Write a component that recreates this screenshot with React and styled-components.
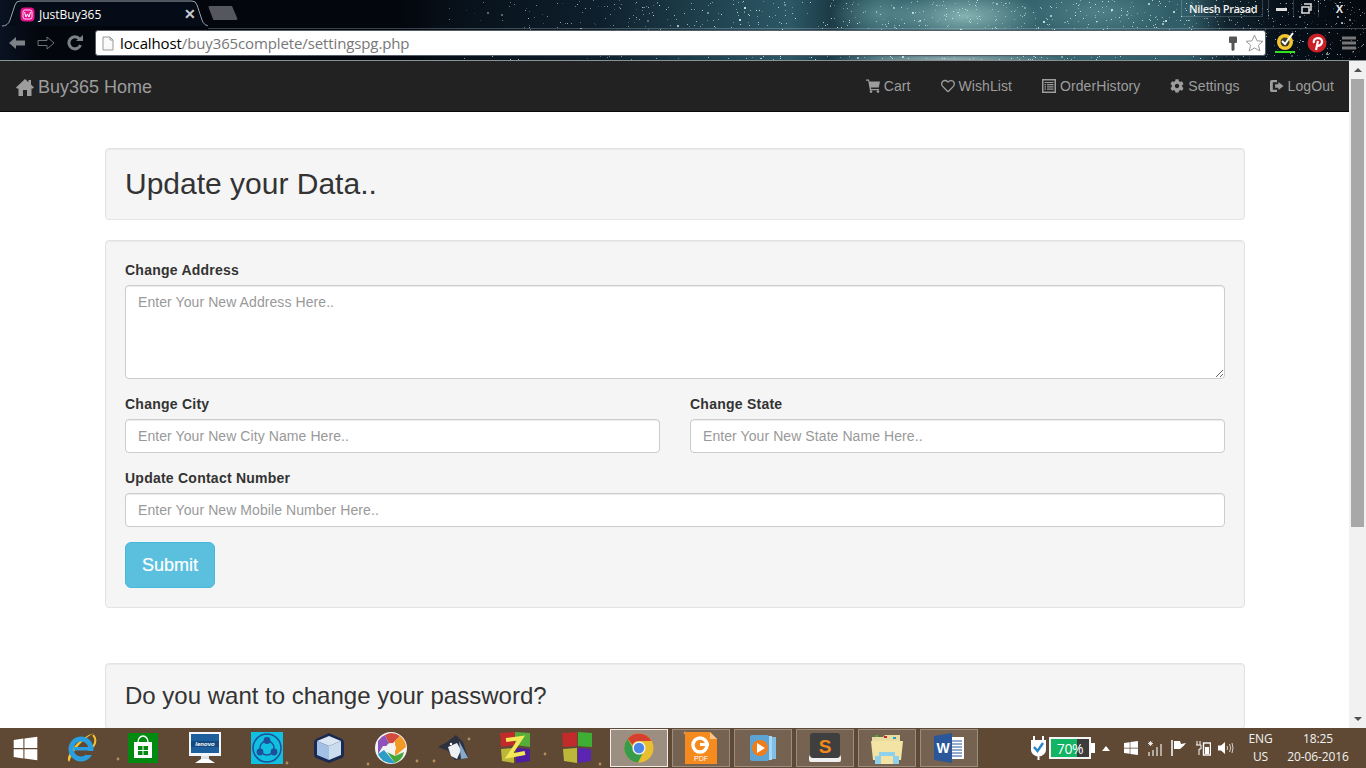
import React from 'react';
import styled, { createGlobalStyle } from 'styled-components';
import { FaRegHeart, FaCog, FaWindows } from 'react-icons/fa';

const GlobalStyle = createGlobalStyle`
  * { box-sizing: border-box; }
  html, body { margin: 0; height: 100%; overflow: hidden; }
  body { font-family: "Liberation Sans", Arial, sans-serif; font-size: 14px; color: #333; background: #fff; }
`;

const Page = styled.div`
  height: 768px;
  display: flex;
  flex-direction: column;
  overflow: hidden;
`;

/* ---------- browser frame ---------- */
const Frame = styled.div`
  position: relative;
  height: 61px;
  flex: none;
  overflow: hidden;
  border-bottom: 1px solid #8b9296;
  background:
    radial-gradient(ellipse 75px 26px at 965px 16px, rgba(160,205,200,.75), transparent),
    radial-gradient(ellipse 50px 24px at 880px 14px, rgba(120,170,170,.5), transparent),
    radial-gradient(ellipse 70px 24px at 1100px 12px, rgba(110,160,165,.45), transparent),
    radial-gradient(ellipse 120px 6px at 950px 59px, rgba(190,205,205,.7), transparent),
    linear-gradient(90deg, #0a1322 0, #03060d 40px, #03060d 400px, #071019 450px, #0e1f2c 600px, #1e3f4c 700px, #2d5866 790px, #1c3b47 830px, #33616c 880px, #36656f 1090px, #305c67 1190px, #12252f 1225px, #06101a 1280px, #05090f 1366px);
`;

const Stars = styled.svg`
  position: absolute;
  inset: 0;
`;

const TabRow = styled.div`
  position: relative;
  height: 29px;
  display: flex;
  align-items: flex-start;
  padding-left: 2px;
  &::after {
    content: "";
    position: absolute;
    left: 208px;
    right: 0;
    bottom: 0;
    height: 1px;
    background: rgba(190,200,205,.3);
  }
`;

const Tab = styled.div`
  position: relative;
  width: 206px;
  height: 27px;
  display: flex;
  align-items: center;
  padding: 1px 12px 0 18px;
  gap: 4px;
  color: #fff;
  font: 12px "Open Sans", sans-serif;
`;

const TabShape = styled.svg`
  position: absolute;
  left: 0;
  top: 0;
`;

const TabTitle = styled.span`
  position: relative;
  flex: 1;
`;

const TabClose = styled.span`
  position: relative;
  color: #c9ccd0;
  font: bold 14px "Liberation Sans", sans-serif;
`;

const NewTab = styled.div`
  width: 30px;
  height: 14px;
  margin: 6px 0 0 0;
  background: #55575c;
  clip-path: polygon(0 0, 80% 0, 100% 100%, 18% 100%);
  border-radius: 2px;
`;

const WindowControls = styled.div`
  position: absolute;
  top: 0;
  right: 6px;
  display: flex;
  align-items: center;
  height: 17px;
  color: #e8e8e8;
`;

const UserName = styled.span`
  font: 600 11px "Open Sans", sans-serif;
  letter-spacing: -0.35px;
  color: #f0f0f0;
  width: 82px;
  height: 17px;
  line-height: 17px;
  padding-left: 7px;
  border: 1px solid rgba(255,255,255,.18);
  border-top: 0;
  margin-right: 5px;
`;

const WinButton = styled.span`
  display: flex;
  align-items: center;
  justify-content: center;
  width: ${p => p.$w}px;
  height: 17px;
  border-left: 1px solid rgba(255,255,255,.18);
  font: bold 11px "Liberation Sans", sans-serif;
`;

const ToolRow = styled.div`
  position: relative;
  display: flex;
  align-items: center;
  height: 26px;
  margin-top: 1px;
  padding-left: 2px;
`;

const NavIcon = styled.span`
  display: flex;
  justify-content: center;
  width: 29px;
`;

const Omnibox = styled.div`
  width: 1171px;
  height: 26px;
  margin-left: 6px;
  background: #fff;
  border: 1px solid #555e66;
  border-radius: 3px;
  display: flex;
  align-items: center;
  padding: 0 1px 0 6px;
`;

const Url = styled.div`
  flex: 1;
  margin-left: 6px;
  font: 15px "Open Sans", sans-serif;
  letter-spacing: -0.12px;
  color: #777;
  span { color: #000; }
`;

const Extensions = styled.div`
  display: flex;
  align-items: center;
  margin-left: 9px;
  gap: 12px;
`;

/* ---------- navbar ---------- */
const Main = styled.div`
  flex: 1;
  display: flex;
  min-height: 0;
`;

const Viewport = styled.div`
  flex: 1;
  min-width: 0;
  overflow: hidden;
`;

const Navbar = styled.nav`
  height: 51px;
  background: #222;
  border-bottom: 1px solid #080808;
  display: flex;
  align-items: center;
  justify-content: space-between;
  color: #9d9d9d;
`;

const Brand = styled.a`
  display: flex;
  align-items: center;
  gap: 4px;
  padding: 2px 15px 0 16px;
  font-size: 18px;
  line-height: 20px;
`;

const NavLinks = styled.ul`
  display: flex;
  list-style: none;
  margin: 0;
  padding: 0 15px 0 0;
`;

const NavLink = styled.li`
  display: flex;
  align-items: center;
  gap: 4px;
  padding: 0 15px;
  line-height: 20px;
  letter-spacing: 0.08px;
  margin-top: -1px;
  &:last-child { padding-right: 0; }
`;

/* ---------- page body ---------- */
const Container = styled.div`
  padding: 36px 104px 0 105px;
`;

const Well = styled.section`
  background: #f5f5f5;
  border: 1px solid #e3e3e3;
  border-radius: 4px;
  padding: 19px;
  margin-bottom: ${p => p.$mb || 20}px;
  box-shadow: inset 0 1px 1px rgba(0,0,0,.05);
`;

const Title = styled.h3`
  margin: 0;
  font-size: 30px;
  font-weight: 500;
  line-height: 32px;
`;

const SubTitle = styled.h3`
  margin: 0;
  font-size: 24px;
  font-weight: 500;
  line-height: 26px;
`;

const Field = styled.div`
  margin-bottom: 15px;
`;

const FieldRow = styled.div`
  display: grid;
  grid-template-columns: 1fr 1fr;
  gap: 30px;
`;

const Label = styled.label`
  display: block;
  font-weight: 700;
  letter-spacing: 0.24px;
  line-height: 20px;
  margin-bottom: 5px;
`;

const controlCss = `
  display: block;
  width: 100%;
  padding: 6px 12px;
  font: 14px/20px "Liberation Sans", sans-serif;
  letter-spacing: 0.08px;
  color: #555;
  background: #fff;
  border: 1px solid #ccc;
  border-radius: 4px;
  box-shadow: inset 0 1px 1px rgba(0,0,0,.075);
  &::placeholder { color: #999; opacity: 1; }
`;

const Input = styled.input`
  ${controlCss}
  height: 34px;
`;

const TextArea = styled.textarea`
  ${controlCss}
  height: 94px;
  margin-bottom: 0;
`;

const SubmitButton = styled.button`
  display: block;
  width: 90px;
  height: 46px;
  padding: 10px 16px;
  font: 18px/24px "Liberation Sans", sans-serif;
  -webkit-text-stroke: 0.2px #fff;
  color: #fff;
  background: #5bc0de;
  border: 1px solid #46b8da;
  border-radius: 6px;
`;

/* ---------- scrollbar ---------- */
const Scrollbar = styled.div`
  width: 17px;
  flex: none;
  background: #f1f1f1;
  display: flex;
  flex-direction: column;
  align-items: center;
`;

const Arrow = styled.div`
  height: 18px;
  flex: none;
  display: flex;
  align-items: center;
  &::before {
    content: "";
    border-left: 4px solid transparent;
    border-right: 4px solid transparent;
    ${p => p.$down ? 'border-top: 4px solid #505050;' : 'border-bottom: 4px solid #505050;'}
  }
`;

const Thumb = styled.div`
  width: 13px;
  height: 448px;
  background: #a8a8a8;
`;

const Track = styled.div`
  flex: 1;
`;

/* ---------- taskbar ---------- */
const Taskbar = styled.footer`
  position: relative;
  height: 40px;
  flex: none;
  display: flex;
  align-items: center;
  background: #5f4934;
  color: #f2f2f2;
  overflow: hidden;
`;

const StartButton = styled.div`
  width: 50px;
  display: flex;
  justify-content: center;
  color: #fff;
`;

const TaskItem = styled.div`
  position: relative;
  width: 58px;
  height: 38px;
  margin: 0 2px;
  display: flex;
  align-items: center;
  justify-content: center;
  ${p => p.$open && `
    background: rgba(255,255,255,.14);
    border: 1px solid rgba(255,255,255,.28);
  `}
  ${p => p.$active && `
    background: rgba(255,255,255,.38);
    border: 1px solid rgba(255,255,255,.85);
  `}
`;

const Tray = styled.div`
  position: relative;
  margin-left: auto;
  display: flex;
  align-items: center;
  height: 40px;
`;

const TrayIcon = styled.span`
  display: flex;
  justify-content: center;
  width: ${p => p.$w || 24}px;
  color: #fff;
`;

const Battery = styled.div`
  position: relative;
  width: 42px;
  height: 22px;
  border: 2px solid #f4f4f4;
  background: linear-gradient(90deg, #12b564 0 68%, #3c3c3c 68%);
  display: flex;
  align-items: center;
  justify-content: center;
  color: #fff;
  font: 14px "Open Sans", sans-serif;
  letter-spacing: -0.4px;
  margin-right: 3px;
  &::after {
    content: "";
    position: absolute;
    right: -6px;
    top: 4px;
    width: 4px;
    height: 10px;
    background: #fff;
  }
`;

const TrayText = styled.div`
  width: ${p => p.$w}px;
  text-align: center;
  font: 12px/18px "Open Sans", sans-serif;
  color: #f2f2f2;
  letter-spacing: -0.1px;
`;

// stars only start about a third of the way across the wallpaper
const starData = (() => {
  let s = 7;
  const r = () => (s = (s * 16807) % 2147483647) / 2147483647;
  return Array.from({ length: 1300 }, () => {
    const x = 440 + Math.pow(r(), 0.7) * 926;
    return {
      x: Math.round(x),
      y: Math.round(r() * 60),
      o: (x > 640 && x < 1200 ? 0.3 : 0.12) + r() * 0.6,
      s: r() > 0.96 ? 2 : 1,
    };
  });
})();

const sparkData = [[118, 31], [287, 35], [368, 36], [417, 33], [434, 33], [469, 11], [545, 26], [600, 36], [685, 5]];

const Arrowhead = ({ flip, color, hollow }) => (
  <svg width="18" height="14" viewBox="0 0 18 14" style={{ transform: flip ? 'scaleX(-1)' : 'none' }}>
    <path d="M1 7 L8 1 V4.5 H17 V9.5 H8 V13 Z" fill={hollow ? 'none' : color} stroke={hollow ? color : 'none'} />
  </svg>
);

const Favicon = () => (
  <svg width="15" height="15" viewBox="0 0 15 15" style={{ position: 'relative' }}>
    <rect x="0.5" y="0.5" width="14" height="14" rx="4" fill="#e5128c" />
    <rect x="3" y="3" width="9" height="9" rx="2" fill="none" stroke="#ffd8ee" strokeWidth="1" />
    <path d="M4.5 5 L6 10 L7.5 7 L9 10 L10.5 5" fill="none" stroke="#fff" strokeWidth="1" />
  </svg>
);

const HomeGlyph = () => (
  <svg width="18" height="17" viewBox="0 0 18 17">
    <path d="M9 0 L12.5 3.2 V1 H15 V5.5 L18 8.5 L17 9.5 H15.5 V17 H11 V11 H7 V17 H2.5 V9.5 H1 L0 8.5 Z" fill="currentColor" />
  </svg>
);

const CartGlyph = () => (
  <svg width="14" height="14" viewBox="0 0 14 14">
    <path d="M0 0.5 H3 L3.6 2.5 H14 L12.8 8.5 H5 L5.2 10 H13 V11.2 H3.9 L2.2 1.8 H0 Z" fill="currentColor" />
    <circle cx="5" cy="12.6" r="1.3" fill="currentColor" />
    <circle cx="12" cy="12.6" r="1.3" fill="currentColor" />
  </svg>
);

const ListGlyph = () => (
  <svg width="14" height="14" viewBox="0 0 14 14">
    <rect x="0.75" y="0.75" width="12.5" height="12.5" fill="none" stroke="currentColor" strokeWidth="1.5" />
    <path d="M2.5 3.5 H11.5 M2.5 5.7 H4 M5 5.7 H11.5 M2.5 7.9 H4 M5 7.9 H11.5 M2.5 10.1 H4 M5 10.1 H11.5" stroke="currentColor" strokeWidth="1.2" />
  </svg>
);

const LogoutGlyph = () => (
  <svg width="14" height="14" viewBox="0 0 15 14">
    <path d="M0 2.5 Q0 .5 2 .5 H7.5 V3 H3 V11 H7.5 V13.5 H2 Q0 13.5 0 11.5 Z" fill="currentColor" />
    <path d="M5.5 5.2 H9 V2.8 L14.5 7 L9 11.2 V8.8 H5.5 Z" fill="currentColor" />
  </svg>
);

const ShellIcons = {
  ie: (
    <svg width="32" height="32" viewBox="0 0 32 32">
      <path d="M4 30 C-1 26 12 6 29 1 C20 5 8 18 5 28" fill="#f2c230" />
      <path d="M28 3 C32 7 30 12 28 15" fill="none" stroke="#f2c230" strokeWidth="2" />
      <circle cx="16" cy="17" r="10" fill="none" stroke="#2a9fe0" strokeWidth="5" />
      <rect x="9" y="15" width="16" height="3.5" fill="#2a9fe0" />
      <rect x="21" y="19" width="8" height="4" fill="#5f4934" />
    </svg>
  ),
  store: (
    <svg width="30" height="30" viewBox="0 0 30 30">
      <rect width="30" height="30" fill="#018a10" />
      <path d="M10 9 A5 6 0 0 1 20 9" fill="none" stroke="#fff" strokeWidth="1.3" />
      <rect x="6" y="9" width="18" height="16" fill="#fff" />
      <path d="M10 13 h4.5 v4 h-4.5 z M15.5 13 h4.5 v4 h-4.5 z M10 18 h4.5 v4 h-4.5 z M15.5 18 h4.5 v4 h-4.5 z" fill="#018a10" />
    </svg>
  ),
  lenovo: (
    <svg width="32" height="32" viewBox="0 0 32 32">
      <rect x="0" y="0" width="32" height="24" fill="#f2f5fa" />
      <rect x="2" y="2" width="28" height="19" fill="#1d5f9c" />
      <rect x="2" y="9" width="28" height="6" fill="#134a80" />
      <rect x="12" y="24" width="8" height="4" fill="#dfe3e8" />
      <path d="M6 31 L12 27 H20 L26 31 Z" fill="#fff" />
      <text x="16" y="14" fontSize="6" fontStyle="italic" fontWeight="700" textAnchor="middle" fill="#fff" fontFamily="Liberation Sans">lenovo</text>
    </svg>
  ),
  share: (
    <svg width="32" height="32" viewBox="0 0 32 32">
      <rect width="32" height="32" fill="#11bfe0" />
      <circle cx="16" cy="16" r="14" fill="none" stroke="#1d4f9c" strokeWidth="1.5" />
      <circle cx="16" cy="16" r="7" fill="none" stroke="#1d4f9c" strokeWidth="1.5" />
      <circle cx="16" cy="8.5" r="3.4" fill="#1d4f9c" />
      <circle cx="9" cy="20" r="3.4" fill="#1d4f9c" />
      <circle cx="23" cy="20" r="3.4" fill="#1d4f9c" />
    </svg>
  ),
  cube: (
    <svg width="32" height="32" viewBox="0 0 32 32">
      <path d="M16 1 L29 7 Q31 8 31 11 V22 Q31 25 29 26 L16 31 L3 26 Q1 25 1 22 V11 Q1 8 3 7 Z" fill="#1a2a52" />
      <path d="M16 4 L28 9 L16 14 L4 9 Z" fill="#dbe6f3" />
      <path d="M4 9 L16 14 V28 L4 23 Z" fill="#a3c1e4" />
      <path d="M28 9 L16 14 V28 L28 23 Z" fill="#cbdcef" />
    </svg>
  ),
  picasa: (
    <svg width="32" height="32" viewBox="0 0 32 32">
      <circle cx="16" cy="16" r="16" fill="#f3f3f3" />
      <path d="M16 1 A15 15 0 0 1 25 4 L15 14 L10 3 A15 15 0 0 1 16 1 Z" fill="#d24b3e" />
      <path d="M25 4 A15 15 0 0 1 31 15 L20 24 L20 9 Z" fill="#f29b24" />
      <path d="M3 9 A15 15 0 0 1 10 3 L15 14 L8 14 L3 22 Z" fill="#8d53bb" />
      <path d="M3 22 L9 18 L20 31 A15 15 0 0 1 3 22 Z" fill="#2e9cc9" />
      <path d="M12 20 L20 24 L29 20 A15 15 0 0 1 20 31 Z" fill="#46a83c" />
      <circle cx="16" cy="16" r="5" fill="#f3f3f3" />
    </svg>
  ),
  bird: (
    <svg width="32" height="28" viewBox="0 0 32 28">
      <path d="M1 13 L10 8 L19 1 L23 5 L26 8 L31 24 L18 26 L11 17 Z" fill="#2c3240" />
      <path d="M11 13 L20 9 L24 16 L20 25 L14 22 Z" fill="#eef1f4" />
      <path d="M22 7 L31 24 L24 25 Z" fill="#87a9c9" />
      <circle cx="14" cy="10" r="1.2" fill="#fff" />
    </svg>
  ),
  ztile: (
    <svg width="30" height="32" viewBox="0 0 30 32">
      <path d="M0 1 L15 0 V13 L1 15 Z" fill="#c22b2b" />
      <path d="M15 0 L30 1 V15 L15 13 Z" fill="#56ae3a" />
      <path d="M1 17 L14 16 V31 L2 29 Z" fill="#bcb93a" />
      <path d="M16 16 L30 17 V29 L16 31 Z" fill="#4f1ea0" />
      <path d="M6 8 L21 6 L9 24 L25 21" fill="none" stroke="#f4e857" strokeWidth="4" />
    </svg>
  ),
  tiles: (
    <svg width="30" height="32" viewBox="0 0 30 32">
      <path d="M0 1 L15 0 V14 L1 15 Z" fill="#c22b2b" />
      <path d="M16 0 L30 1 V15 L16 14 Z" fill="#3fae35" />
      <path d="M1 17 L15 16 V31 L2 29 Z" fill="#bcb93a" />
      <path d="M16 16 L29 17 V29 L16 31 Z" fill="#5a25b3" />
    </svg>
  ),
  chrome: (
    <svg width="30" height="30" viewBox="0 0 30 30">
      <circle cx="15" cy="15" r="14.5" fill="#e9bf2f" />
      <path d="M15 .5 A14.5 14.5 0 0 1 27.5 8 H15 A7 7 0 0 0 8.5 12 L3.7 5.8 A14.5 14.5 0 0 1 15 .5 Z" fill="#d6412f" />
      <path d="M3.7 5.8 L9 15 A6 6 0 0 0 19 19.7 L14 29.5 A14.5 14.5 0 0 1 3.7 5.8 Z" fill="#379b4a" />
      <circle cx="15" cy="15" r="6.6" fill="#f1f1f1" />
      <circle cx="15" cy="15" r="5.2" fill="#4a85e8" />
    </svg>
  ),
  foxit: (
    <svg width="32" height="32" viewBox="0 0 32 32">
      <path d="M0 0 H25 L32 7 V32 H0 Z" fill="#f58a1f" />
      <path d="M25 0 L32 7 H25 Z" fill="#fbc48a" />
      <circle cx="15" cy="13" r="7" fill="none" stroke="#fff" strokeWidth="3.5" />
      <rect x="15" y="11" width="9" height="3" fill="#fff" />
      <text x="16" y="29" fontSize="7" textAnchor="middle" fill="#fff" fontFamily="Liberation Sans">PDF</text>
    </svg>
  ),
  player: (
    <svg width="28" height="28" viewBox="0 0 28 28">
      <rect x="10" y="3" width="17" height="22" fill="#7fc0e8" />
      <rect x="6" y="2" width="17" height="24" fill="#a9d5f0" />
      <rect x="1" y="1" width="19" height="26" rx="2" fill="#5da3d4" />
      <circle cx="11" cy="14" r="8" fill="#ef7d1a" />
      <path d="M8 9 L16 14 L8 19 Z" fill="#fff" />
    </svg>
  ),
  sublime: (
    <svg width="32" height="30" viewBox="0 0 32 30">
      <rect x="0" y="22" width="32" height="7" rx="2" fill="#f0f0f0" />
      <rect x="1" y="0" width="30" height="25" rx="3" fill="#3f3f3f" />
      <text x="16" y="20" fontSize="19" fontWeight="700" textAnchor="middle" fill="#f08a1d" fontFamily="Liberation Sans">S</text>
    </svg>
  ),
  folder: (
    <svg width="32" height="32" viewBox="0 0 32 32">
      <path d="M1 5 H12 L14 3 H29 V10 H1 Z" fill="#e9dca0" />
      <rect x="4" y="3" width="3" height="2" fill="#3fae35" />
      <rect x="13" y="4" width="3" height="2" fill="#c22b2b" />
      <rect x="22" y="5" width="3" height="2" fill="#2e9cc9" />
      <path d="M0 9 H32 L30 28 H2 Z" fill="#f3e4a6" />
      <path d="M4 24 H8 V20 H24 V24 H28 V32 H4 Z" fill="#8fd0ea" />
      <rect x="10" y="24" width="12" height="8" fill="#f3e4a6" />
    </svg>
  ),
  word: (
    <svg width="30" height="30" viewBox="0 0 30 30">
      <rect x="14" y="4" width="16" height="22" fill="#fff" />
      <path d="M17 8 H28 M17 11 H28 M17 14 H28 M17 17 H28 M17 20 H28 M17 23 H28" stroke="#2b579a" strokeWidth="1" />
      <path d="M0 3 L18 0 V30 L0 27 Z" fill="#2b579a" />
      <text x="9" y="20" fontSize="14" fontWeight="700" textAnchor="middle" fill="#fff" fontFamily="Liberation Sans">W</text>
    </svg>
  ),
};

const pinned = ['ie', 'store', 'lenovo', 'share', 'cube', 'picasa', 'bird', 'ztile', 'tiles'];
const running = ['chrome', 'foxit', 'player', 'sublime', 'folder', 'word'];

const links = [
  { label: 'Cart', icon: <CartGlyph /> },
  { label: 'WishList', icon: <FaRegHeart size={14} /> },
  { label: 'OrderHistory', icon: <ListGlyph /> },
  { label: 'Settings', icon: <FaCog size={14} /> },
  { label: 'LogOut', icon: <LogoutGlyph /> },
];

export default function App() {
  return (
    <Page>
      <GlobalStyle />
      <Frame>
        <Stars width="1366" height="61">
          {starData.map((d, i) => (
            <rect key={i} x={d.x} y={d.y} width={d.s} height={d.s} fill="#d6ecec" opacity={d.o} />
          ))}
        </Stars>
        <TabRow>
          <Tab>
            <TabShape width="206" height="28" viewBox="0 0 206 28">
              <path d="M0 26 Q6 26 8 20 L13 5 Q14 1 18 1 L190 1 Q194 1 195 5 L200 20 Q202 26 208 26" fill="#060c17" stroke="#9aa3ab" strokeWidth="1" />
            </TabShape>
            <Favicon />
            <TabTitle>JustBuy365</TabTitle>
            <TabClose>✕</TabClose>
          </Tab>
          <NewTab />
        </TabRow>
        <WindowControls>
          <UserName>Nilesh Prasad</UserName>
          <WinButton $w={25}>
            <svg width="11" height="4"><rect width="11" height="3" y="1" fill="#ddd" /></svg>
          </WinButton>
          <WinButton $w={25}>
            <svg width="11" height="11" viewBox="0 0 11 11"><path d="M3 1 H10 V7 H8 M1 4 H8 V10 H1 Z" fill="none" stroke="#ddd" strokeWidth="1.5" /></svg>
          </WinButton>
          <WinButton $w={42}>X</WinButton>
        </WindowControls>
        <ToolRow>
          <NavIcon><Arrowhead color="#7d8286" /></NavIcon>
          <NavIcon><Arrowhead flip hollow color="#6d7276" /></NavIcon>
          <NavIcon>
            <svg width="18" height="18" viewBox="0 0 18 18">
              <path d="M14.5 11 A6 6 0 1 1 13.5 5" fill="none" stroke="#7d8286" strokeWidth="3" />
              <path d="M10 7 H17 V1 Z" fill="#7d8286" />
            </svg>
          </NavIcon>
          <Omnibox>
            <svg width="12" height="15" viewBox="0 0 12 15">
              <path d="M1 1 H8 L11 4 V14 H1 Z M8 1 V4 H11" fill="#fafafa" stroke="#9a9a9a" />
            </svg>
            <Url><span>localhost</span>/buy365complete/settingspg.php</Url>
            <svg width="10" height="15" viewBox="0 0 10 15" style={{ marginRight: 7 }}>
              <path d="M1 1.5 Q1 .5 2 .5 H8 Q9 .5 9 1.5 V6 Q9 7 8 7 H6.5 V14 L4.5 15 L3.5 14 V7 H2 Q1 7 1 6 Z" fill="#555" />
            </svg>
            <svg width="19" height="18" viewBox="0 0 19 18">
              <path d="M9.5 1 L12 6.8 L18 7.3 L13.4 11.2 L14.9 17 L9.5 13.9 L4.1 17 L5.6 11.2 L1 7.3 L7 6.8 Z" fill="#fff" stroke="#999" />
            </svg>
          </Omnibox>
          <Extensions>
            <svg width="20" height="22" viewBox="0 0 20 22">
              <circle cx="10" cy="10" r="8" fill="#f3c62e" />
              <circle cx="10" cy="10" r="4.5" fill="#3a3a2a" />
              <path d="M7 9 L10 12 L18 1" fill="none" stroke="#fff" strokeWidth="2" />
              <rect y="19" width="20" height="2" fill="#32e020" />
            </svg>
            <svg width="20" height="20" viewBox="0 0 20 20">
              <circle cx="10" cy="10" r="9.5" fill="#cb2027" />
              <path d="M9 17 L11 8 M7 10 C5 5 14 3 15 8 C15.5 12 11 14 9.5 12" fill="none" stroke="#fff" strokeWidth="2.2" />
            </svg>
            <svg width="14" height="14" viewBox="0 0 14 14" style={{ marginLeft: 3 }}>
              <path d="M0 2 H14 M0 7 H14 M0 12 H14" stroke="#777" strokeWidth="3" />
            </svg>
          </Extensions>
        </ToolRow>
      </Frame>

      <Main>
        <Viewport>
          <Navbar>
            <Brand><HomeGlyph />Buy365 Home</Brand>
            <NavLinks>
              {links.map(({ label, icon }) => (
                <NavLink key={label}>{icon}{label}</NavLink>
              ))}
            </NavLinks>
          </Navbar>
          <Container>
            <Well>
              <Title>Update your Data..</Title>
            </Well>
            <Well $mb={55}>
              <Field>
                <Label>Change Address</Label>
                <TextArea placeholder="Enter Your New Address Here.." />
              </Field>
              <FieldRow>
                <Field>
                  <Label>Change City</Label>
                  <Input placeholder="Enter Your New City Name Here.." />
                </Field>
                <Field>
                  <Label>Change State</Label>
                  <Input placeholder="Enter Your New State Name Here.." />
                </Field>
              </FieldRow>
              <Field>
                <Label>Update Contact Number</Label>
                <Input placeholder="Enter Your New Mobile Number Here.." />
              </Field>
              <SubmitButton>Submit</SubmitButton>
            </Well>
            <Well>
              <SubTitle>Do you want to change your password?</SubTitle>
            </Well>
          </Container>
        </Viewport>
        <Scrollbar>
          <Arrow />
          <Thumb />
          <Track />
          <Arrow $down />
        </Scrollbar>
      </Main>

      <Taskbar>
        <Stars width="1366" height="40">
          {sparkData.map(([x, y], i) => (
            <circle key={i} cx={x} cy={y} r="1.4" fill="#d8ac70" opacity="0.7" />
          ))}
        </Stars>
        <StartButton><FaWindows size={27} style={{ position: 'relative' }} /></StartButton>
        {pinned.map(k => <TaskItem key={k}>{ShellIcons[k]}</TaskItem>)}
        {running.map((k, i) => <TaskItem key={k} $open $active={i === 0}>{ShellIcons[k]}</TaskItem>)}
        <Tray>
          <TrayIcon $w={21}>
            <svg width="17" height="24" viewBox="0 0 17 24">
              <path d="M4 0 V4 M13 0 V4" stroke="#fff" strokeWidth="2" />
              <path d="M1 4 H16 V14 Q16 19 8.5 21 Q1 19 1 14 Z" fill="#fff" />
              <path d="M4 11 L7.5 15 L13 7" fill="none" stroke="#2a88c8" strokeWidth="2.5" />
              <path d="M8.5 21 V24" stroke="#fff" strokeWidth="2" />
            </svg>
          </TrayIcon>
          <Battery>70%</Battery>
          <TrayIcon $w={24}>
            <svg width="8" height="5"><path d="M0 5 L4 0 L8 5 Z" fill="#fff" /></svg>
          </TrayIcon>
          <TrayIcon $w={26}><FaWindows size={16} /></TrayIcon>
          <TrayIcon $w={22}>
            <svg width="16" height="15" viewBox="0 0 16 15">
              <path d="M1 2.5 H6 M3.5 0 V5 M1.7 .7 L5.3 4.3 M5.3 .7 L1.7 4.3" stroke="#fff" strokeWidth=".8" />
              <path d="M1 11 h2 v4 h-2 z M5 9 h2 v6 h-2 z M9 6 h2 v9 h-2 z M13 3 h2 v12 h-2 z" fill="#b5aa9e" />
            </svg>
          </TrayIcon>
          <TrayIcon $w={24}>
            <svg width="15" height="16" viewBox="0 0 15 16">
              <path d="M1 0 V16" stroke="#fff" strokeWidth="1.5" />
              <path d="M3 1 H9 L10 4 L15 3 L12.5 6 L9 9 H3 Z" fill="#fff" />
            </svg>
          </TrayIcon>
          <TrayIcon $w={25}>
            <svg width="16" height="16" viewBox="0 0 16 16">
              <path d="M2 1 V5 M5 1 V5 M1 5 H6 V9 H4 V15" stroke="#fff" fill="none" />
              <rect x="8.5" y="3" width="7" height="12" fill="none" stroke="#fff" strokeWidth="1.4" />
              <rect x="10" y="7" width="4" height="7" fill="#fff" />
            </svg>
          </TrayIcon>
          <TrayIcon $w={22}>
            <svg width="16" height="14" viewBox="0 0 16 14">
              <path d="M0 4.5 H3 L7 1 V13 L3 9.5 H0 Z" fill="#fff" />
              <path d="M9 5 Q10.5 7 9 9 M11.5 3 Q14 7 11.5 11 M14 2 Q16 7 14 12" fill="none" stroke="#e8e0d8" strokeWidth=".9" />
            </svg>
          </TrayIcon>
          <TrayText $w={47}>ENG<br />US</TrayText>
          <TrayText $w={68}>18:25<br />20-06-2016</TrayText>
          <TrayIcon $w={14} />
        </Tray>
      </Taskbar>
    </Page>
  );
}
